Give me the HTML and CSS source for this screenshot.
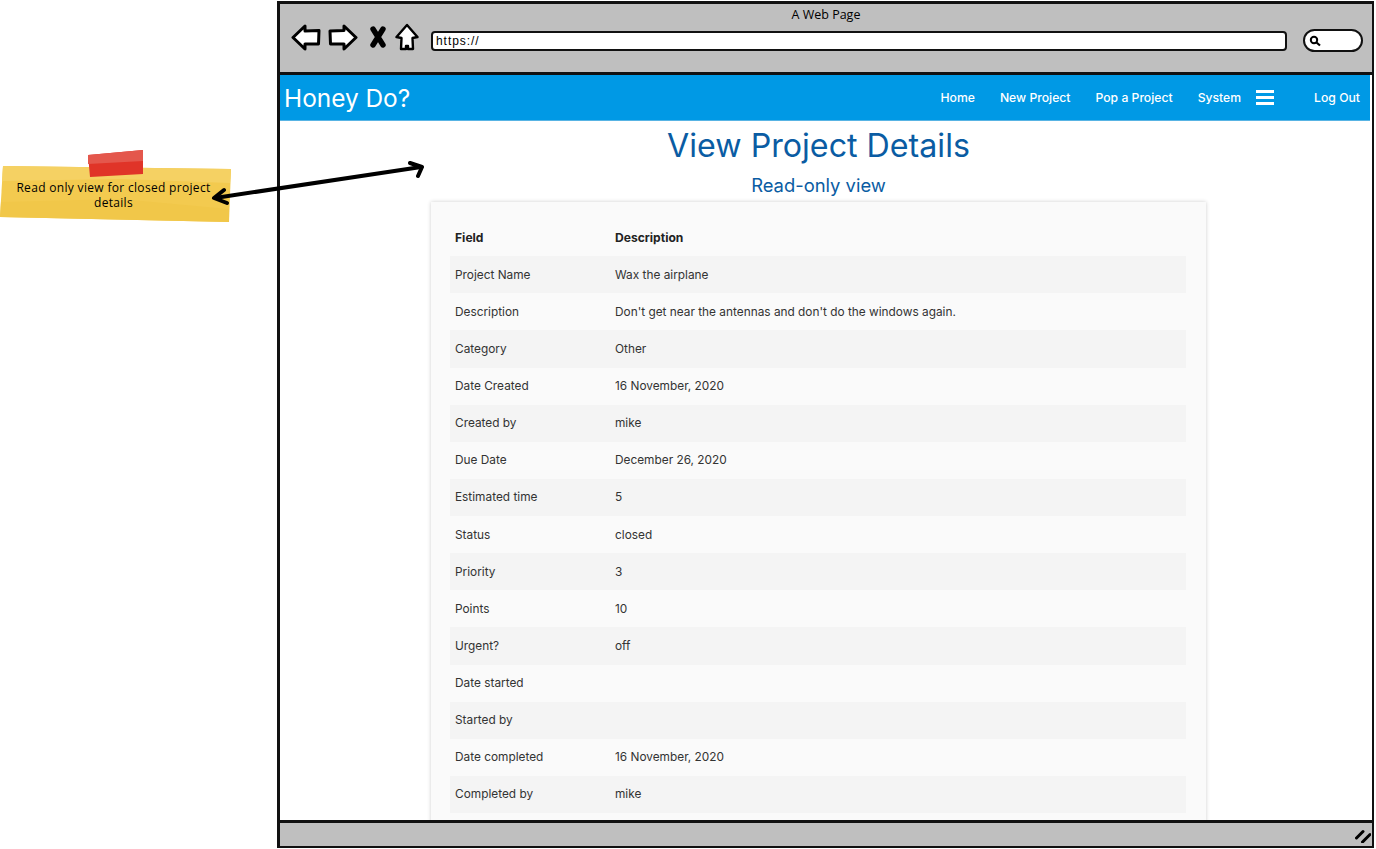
FILE: index.html
```html
<!DOCTYPE html>
<html>
<head>
  <title>Honey Do? - View Project Details</title>
  <meta charset="UTF-8" />
  <link rel="stylesheet" href="styles.css">
</head>
<body>

  <div class="note">
    <svg class="note-bg" viewBox="0 0 232 74" width="232" height="74">
      <path d="M3 17 L231 20 L229 73 L0 68 Z" fill="#f3ca4f" />
      <path d="M3 17 L231 20 L230 34 L120 30 L2 32 Z" fill="#f5d163" />
      <path d="M1 53 L120 50 L229 60 L229 73 L0 68 Z" fill="#f1c749" />
      <path d="M88 6 L143 1 L143 25 L90 28 Z" fill="#e03428" />
      <path d="M88 6 L143 1 L143 12 L88 15 Z" fill="#e4574c" />
    </svg>
    <p class="note-text">Read only view for closed project details</p>
  </div>

  <div class="window">
    <div class="chrome">
      <div class="chrome-title">A Web Page</div>
      <div class="chrome-row">
        <div class="chrome-icons">
          <svg viewBox="0 0 30 27" width="30" height="27"><path d="M2 13.5 L14 2 L14 7 L28 6.5 L27.5 20 L14 20 L14 25 Z" fill="#fff" stroke="#000" stroke-width="3" stroke-linejoin="round" /></svg>
          <svg viewBox="0 0 30 27" width="30" height="27"><path d="M28 13.5 L16 2 L16 6.5 L2 7 L2.5 20 L16 20 L16 25 Z" fill="#fff" stroke="#000" stroke-width="3" stroke-linejoin="round" /></svg>
          <svg class="icon-x" viewBox="0 0 18 22" width="18" height="22"><path d="M4 3 L14 19 M14 3 L4 19" stroke="#000" stroke-width="5.4" stroke-linecap="round" /></svg>
          <svg class="icon-home" viewBox="0 0 24 28" width="24" height="28"><path d="M12 2 L22.5 14 L17.5 15 L18 26 L13 26 L13 23 L11 23 L11 26 L6 26 L6.5 15 L1.5 14 Z" fill="#fff" stroke="#000" stroke-width="2.4" stroke-linejoin="round" /></svg>
        </div>
        <div class="url-bar">https://</div>
        <div class="search-box">
          <svg viewBox="0 0 12 12" width="12" height="12"><circle cx="5" cy="5" r="3.2" fill="none" stroke="#000" stroke-width="2" /><path d="M7.5 7.5 L11 10.5" stroke="#000" stroke-width="2.2" /></svg>
        </div>
      </div>
    </div>

    <div class="page">
      <nav class="navbar">
        <a class="brand">Honey Do?</a>
        <div class="nav-links">
          <a>Home</a>
          <a>New Project</a>
          <a>Pop a Project</a>
          <a>System</a>
          <span class="burger"><i></i><i></i><i></i></span>
          <a class="logout">Log Out</a>
        </div>
      </nav>

      <div class="content">
        <h1>View Project Details</h1>
        <h2>Read-only view</h2>

        <div class="card">
          <table>
            <thead>
              <tr><th>Field</th><th>Description</th></tr>
            </thead>
            <tbody>
              <tr><td>Project Name</td><td>Wax the airplane</td></tr>
              <tr><td>Description</td><td>Don't get near the antennas and don't do the windows again.</td></tr>
              <tr><td>Category</td><td>Other</td></tr>
              <tr><td>Date Created</td><td>16 November, 2020</td></tr>
              <tr><td>Created by</td><td>mike</td></tr>
              <tr><td>Due Date</td><td>December 26, 2020</td></tr>
              <tr><td>Estimated time</td><td>5</td></tr>
              <tr><td>Status</td><td>closed</td></tr>
              <tr><td>Priority</td><td>3</td></tr>
              <tr><td>Points</td><td>10</td></tr>
              <tr><td>Urgent?</td><td>off</td></tr>
              <tr><td>Date started</td><td></td></tr>
              <tr><td>Started by</td><td></td></tr>
              <tr><td>Date completed</td><td>16 November, 2020</td></tr>
              <tr><td>Completed by</td><td>mike</td></tr>
            </tbody>
          </table>
        </div>
      </div>
    </div>

    <div class="status-bar">
      <svg viewBox="0 0 16 14" width="16" height="14"><path d="M1.5 9 L8 2.5 M7.5 13 L15 5.5" stroke="#000" stroke-width="3" stroke-linecap="round" /></svg>
    </div>
  </div>

  <svg class="arrow" viewBox="0 0 220 44" width="220" height="44">
    <path d="M3 36 L209 5" stroke="#000" stroke-width="4" />
    <path d="M12 28 L2 36 L15 41 M198 1 L210 5 L206 14" fill="none" stroke="#000" stroke-width="4" stroke-linejoin="round" stroke-linecap="round" />
  </svg>

</body>
</html>
```

FILE: styles.css
```css
body {
  margin: 0;
  height: 849px;
  overflow: hidden;
  background: #fff;
  font-family: Inter, 'Noto Sans', sans-serif;
  color: #222;
  display: flex;
  align-items: flex-start;
  position: relative;
}

.note {
  width: 232px;
  margin: 149px 45px 0 0;
  position: relative;
  flex-shrink: 0;
}

.note-bg {
  display: block;
}

.note-text {
  position: absolute;
  top: 31px;
  left: 6px;
  right: 11px;
  margin: 0;
  text-align: center;
  font-family: 'Open Sans', sans-serif;
  font-size: 12px;
  font-weight: 500;
  letter-spacing: 0.32px;
  line-height: 15px;
  color: #000;
}

.arrow {
  position: absolute;
  left: 212px;
  top: 162px;
  overflow: visible;
}

.window {
  width: 1097px;
  height: 847px;
  margin-top: 1px;
  box-sizing: border-box;
  border: solid #111;
  border-width: 3px 2px 2px 3px;
  display: flex;
  flex-direction: column;
  overflow: hidden;
  flex-shrink: 0;
}

.chrome {
  height: 71px;
  flex-shrink: 0;
  box-sizing: border-box;
  background: #bfbfbf;
  border-bottom: 3px solid #111;
}

.chrome-title {
  text-align: center;
  font-family: 'Open Sans', sans-serif;
  font-size: 12.5px;
  font-weight: 500;
  color: #000;
  padding-top: 3px;
  line-height: 16px;
}

.chrome-row {
  display: flex;
  align-items: flex-start;
  padding: 0 9px 0 11px;
}

.chrome-icons {
  display: flex;
  align-items: center;
  width: 140px;
  flex-shrink: 0;
}

.chrome-icons svg + svg {
  margin-left: 7px;
}

.chrome-icons .icon-x {
  margin-left: 11px;
}

.chrome-icons .icon-home {
  margin-left: 8px;
}

.url-bar {
  flex: 1;
  height: 20px;
  margin-top: 8px;
  box-sizing: border-box;
  background: #fff;
  border: 2.5px solid #111;
  border-radius: 4px;
  font-family: 'Liberation Sans', sans-serif;
  font-size: 12px;
  letter-spacing: 0.95px;
  line-height: 17px;
  padding-left: 3px;
  color: #000;
}

.search-box {
  width: 60px;
  height: 23px;
  margin: 6px 0 0 16px;
  box-sizing: border-box;
  background: #fff;
  border: 2.5px solid #111;
  border-radius: 12px;
  display: flex;
  align-items: center;
  padding-left: 4px;
}

.page {
  flex: 1;
  min-height: 0;
  overflow: hidden;
  background: #fff;
  padding-right: 2px;
}

.navbar {
  height: 46px;
  box-sizing: border-box;
  background: #0099e5;
  border-bottom: 1px solid #58b4e4;
  display: flex;
  align-items: center;
  justify-content: space-between;
  color: #fff;
  padding: 0 10px 0 4px;
}

.brand {
  font-size: 24.4px;
  font-weight: 400;
}

.nav-links {
  display: flex;
  align-items: center;
  font-size: 12.2px;
  font-weight: 500;
  gap: 25px;
}

.burger {
  display: flex;
  flex-direction: column;
  gap: 3px;
  width: 18px;
  margin-left: -10px;
}

.burger i {
  display: block;
  height: 3px;
  background: #fff;
}

.logout {
  margin-left: 15px;
}

.content {
  width: 775px;
  margin-left: 151px;
}

h1 {
  margin: 3px 0 0;
  text-align: center;
  font-size: 32.2px;
  font-weight: 400;
  line-height: 44px;
  color: #0a5ca3;
}

h2 {
  margin: 5px 0 0;
  text-align: center;
  font-size: 18.4px;
  font-weight: 400;
  line-height: 24px;
  color: #0a5ca3;
}

.card {
  margin-top: 5px;
  background: #fafafa;
  padding: 17px 20px 20px 19px;
  box-shadow: 0 0 4px rgba(0, 0, 0, 0.2);
}

table {
  width: 100%;
  border-collapse: collapse;
  font-size: 11.85px;
  color: #333;
}

th, td {
  height: 37.13px;
  padding: 0 0 0 5px;
  text-align: left;
}

th {
  font-size: 12.1px;
  font-weight: 700;
  color: #222;
}

th:first-child, td:first-child {
  width: 155px;
}

tbody tr:nth-child(odd) {
  background: #f4f4f4;
}

.status-bar {
  height: 26px;
  flex-shrink: 0;
  box-sizing: border-box;
  background: #bfbfbf;
  border-top: 3px solid #111;
  display: flex;
  align-items: center;
  justify-content: flex-end;
  padding: 2px 1px 0 0;
}
```
